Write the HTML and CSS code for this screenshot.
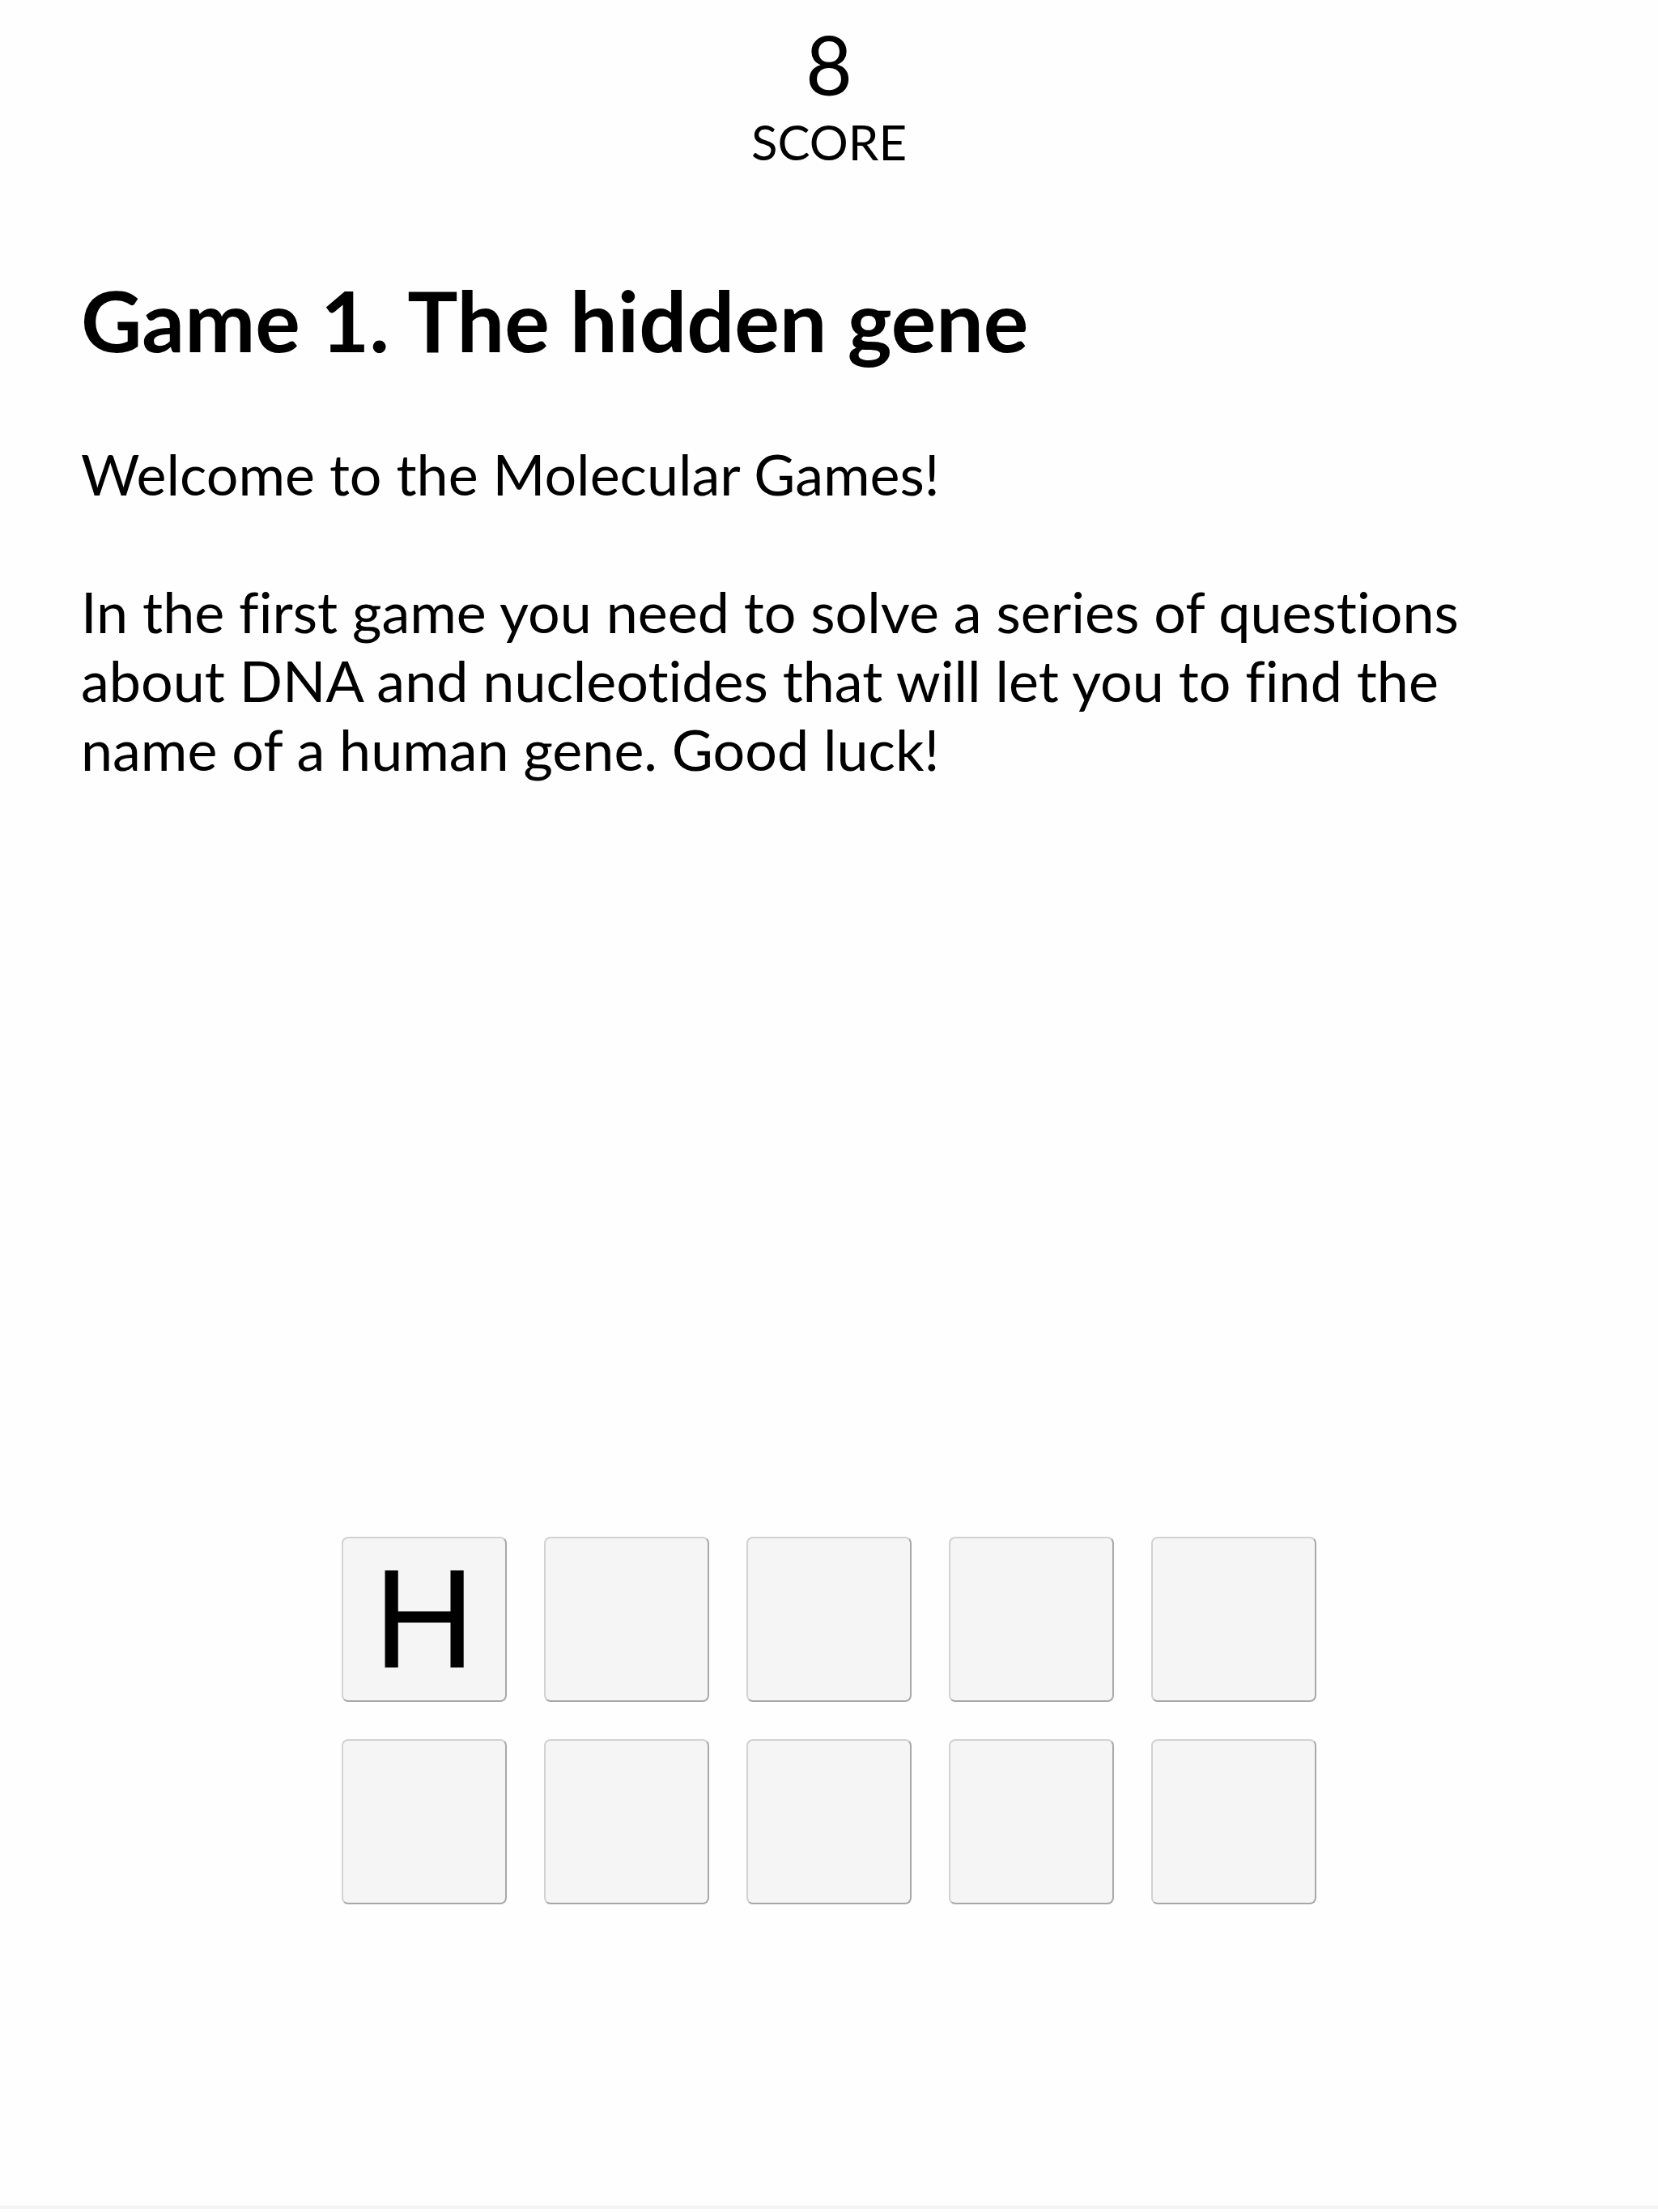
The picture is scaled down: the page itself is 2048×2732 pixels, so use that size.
FILE: index.html
```html
<!DOCTYPE html>
<html lang="en">
<head>
<meta charset="utf-8">
<title>Game 1. The hidden gene</title>
<link rel="stylesheet" href="styles.css">
</head>
<body>
<div class="page">
  <header class="score">
    <div class="score-value">8</div>
    <div class="score-label">SCORE</div>
  </header>
  <main class="content">
    <h1 class="title">Game 1. The hidden gene</h1>
    <p class="intro">Welcome to the Molecular Games!<br><br>In the first game you need to solve a series of questions about DNA and nucleotides that will let you to find the name of a human gene. Good luck!</p>
    <div class="tiles">
      <div class="tile">H</div>
      <div class="tile"></div>
      <div class="tile"></div>
      <div class="tile"></div>
      <div class="tile"></div>
      <div class="tile"></div>
      <div class="tile"></div>
      <div class="tile"></div>
      <div class="tile"></div>
      <div class="tile"></div>
    </div>
  </main>
  <footer class="bottom-bar"></footer>
</div>
</body>
</html>
```

FILE: styles.css
```css
* { box-sizing: border-box; }
html, body {
  margin: 0;
  padding: 0;
  background: #fefefe;
}
body {
  font-family: Lato, "Noto Sans", sans-serif;
  font-variant-ligatures: none;
  color: #000;
}
.page {
  width: 2048px;
  height: 2732px;
  display: flex;
  flex-direction: column;
}
.score {
  padding-top: 19px;
  text-align: center;
}
.score-value {
  font-size: 100px;
  line-height: 120px;
}
.score-label {
  font-size: 60px;
  line-height: 72px;
}
.content {
  flex: 1;
  padding: 0 100px;
}
.title {
  margin: 121px 0 0;
  font-size: 104px;
  font-weight: 700;
  line-height: 125px;
}
.intro {
  margin: 86px 0 0;
  font-size: 70px;
  line-height: 85px;
  max-width: 1800px;
}
.tiles {
  margin: 930px auto 0;
  display: grid;
  grid-template-columns: repeat(5, 204px);
  grid-auto-rows: 204px;
  column-gap: 46px;
  row-gap: 46px;
  justify-content: center;
}
.tile {
  background: #f5f5f5;
  border: 2px solid;
  border-color: #d2d2d2 #a8a8a8 #a8a8a8 #d2d2d2;
  border-radius: 8px;
  display: flex;
  align-items: center;
  justify-content: center;
  font-family: "Liberation Sans", Arial, sans-serif;
  font-size: 174px;
  line-height: 1;
  color: #000;
}
.bottom-bar {
  height: 8px;
  border-top: 4px solid #f3f3f3;
  background: #fefefe;
}
```
